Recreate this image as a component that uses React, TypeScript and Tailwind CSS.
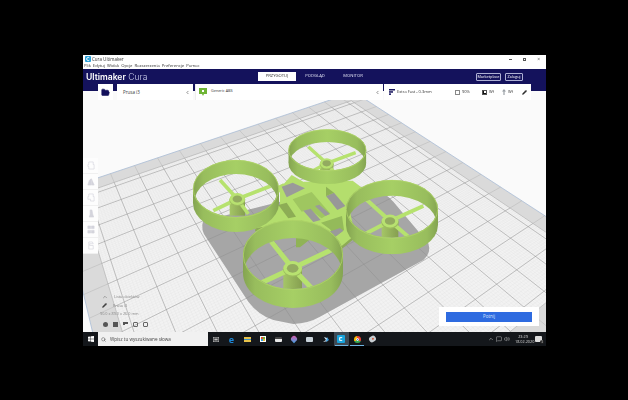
import { ChevronLeft, ChevronUp, FolderOpen, Pencil, Search, Volume2, MessageSquare } from "lucide-react";

type P = [number, number];

const P1: P = [58.9, 190.9];
const P0: P = [354, 92];
const P2: P = [627, 269];
const P3: P = [172, 665];
const N = 15;

function makeH(a: P, b: P, c: P, d: P) {
  const dx1 = b[0] - c[0], dx2 = d[0] - c[0], sx = a[0] - b[0] + c[0] - d[0];
  const dy1 = b[1] - c[1], dy2 = d[1] - c[1], sy = a[1] - b[1] + c[1] - d[1];
  const det = dx1 * dy2 - dx2 * dy1;
  const g = (sx * dy2 - dx2 * sy) / det;
  const h = (dx1 * sy - sx * dy1) / det;
  const A = b[0] - a[0] + g * b[0], B = d[0] - a[0] + h * d[0], C = a[0];
  const D = b[1] - a[1] + g * b[1], E = d[1] - a[1] + h * d[1], F = a[1];
  return (u: number, v: number): P => {
    const w = g * u + h * v + 1;
    return [(A * u + B * v + C) / w, (D * u + E * v + F) / w];
  };
}
const H = makeH(P1, P0, P2, P3);
const M = 0.048;

function gridPath(n: number) {
  let s = "";
  for (let i = 1; i < n; i++) {
    const t = i / n;
    const a = H(t, M), b = H(t, 1 - M), c = H(M, t), d = H(1 - M, t);
    if (t > M && t < 1 - M) {
      s += `M${a[0].toFixed(1)} ${a[1].toFixed(1)}L${b[0].toFixed(1)} ${b[1].toFixed(1)}`;
      s += `M${c[0].toFixed(1)} ${c[1].toFixed(1)}L${d[0].toFixed(1)} ${d[1].toFixed(1)}`;
    }
  }
  return s;
}
function bandPath(n: number) {
  let s = "";
  for (let i = 1; i < n; i++) {
    const t = i / n;
    const pairs: [P, P][] = [
      [H(t, 0), H(t, M)],
      [H(t, 1 - M), H(t, 1)],
      [H(0, t), H(M, t)],
      [H(1 - M, t), H(1, t)],
    ];
    for (const [a, b] of pairs) s += `M${a[0].toFixed(1)} ${a[1].toFixed(1)}L${b[0].toFixed(1)} ${b[1].toFixed(1)}`;
  }
  return s;
}
const poly = (pts: P[]) => pts.map((p) => p.map((v) => v.toFixed(1)).join(",")).join(" ");

type RingP = {
  id: string;
  cx: number;
  top: number;
  bot: number;
  rx: number;
  ry: number;
  hub: P;
  spokes: P[];
  w: number;
  hubR: number;
  col: number;
};

const rings: RingP[] = [
  { id: "b", cx: 442, top: 91, bot: 129, rx: 117, ry: 63, hub: [440, 130], spokes: [[385, 80], [527, 98], [385, 160], [470, 165]], w: 10, hubR: 20, col: 36 },
  { id: "a", cx: 168, top: 207, bot: 249, rx: 129, ry: 87, hub: [172, 237], spokes: [[120, 180], [280, 195], [100, 272], [205, 282]], w: 11, hubR: 23, col: 50 },
  { id: "c", cx: 636, top: 268, bot: 315, rx: 138, ry: 88, hub: [630, 303], spokes: [[555, 235], [730, 258], [555, 342], [692, 356]], w: 12, hubR: 25, col: 52 },
  { id: "d", cx: 339, top: 405, bot: 459, rx: 150, ry: 105, hub: [338, 445], spokes: [[270, 360], [458, 388], [230, 495], [400, 510]], w: 15, hubR: 28, col: 75 },
];

function Ring({ r }: { r: RingP }) {
  return (
    <g>
      <defs>
        <clipPath id={`top-${r.id}`}>
          <ellipse cx={r.cx} cy={r.top} rx={r.rx - 3} ry={r.ry - 3} />
        </clipPath>
        <clipPath id={`bot-${r.id}`}>
          <ellipse cx={r.cx} cy={r.bot} rx={r.rx - 3} ry={r.ry} />
        </clipPath>
        <mask id={`m-${r.id}`} maskUnits="userSpaceOnUse" x="-100" y="-100" width="1200" height="1000">
          <ellipse cx={r.cx} cy={r.top} rx={r.rx} ry={r.ry} fill="white" />
          <ellipse cx={r.cx} cy={r.bot} rx={r.rx} ry={r.ry} fill="white" />
          <rect x={r.cx - r.rx} y={r.top} width={r.rx * 2} height={r.bot - r.top} fill="white" />
          <g clipPath={`url(#top-${r.id})`}>
            <ellipse cx={r.cx} cy={r.bot} rx={r.rx - 3} ry={r.ry} fill="black" />
          </g>
        </mask>
      </defs>
      <g clipPath={`url(#bot-${r.id})`}>
        <g clipPath={`url(#top-${r.id})`}>
          <rect x={r.hub[0] - r.hubR} y={r.hub[1]} width={r.hubR * 2} height={r.col} fill="url(#col)" />
          {r.spokes.map((s, i) => (
            <line key={i} x1={r.hub[0]} y1={r.hub[1]} x2={s[0]} y2={s[1]} stroke="#b6e26e" strokeWidth={r.w} />
          ))}
        </g>
      </g>
      <ellipse cx={r.hub[0]} cy={r.hub[1] + 3} rx={r.hubR + 1} ry={r.hubR * 0.8} fill="#9dbd5f" />
      <ellipse cx={r.hub[0]} cy={r.hub[1]} rx={r.hubR} ry={r.hubR * 0.78} fill="#b8e270" />
      <ellipse cx={r.hub[0]} cy={r.hub[1]} rx={r.hubR * 0.62} ry={r.hubR * 0.46} fill="#93ab60" />
      <g mask={`url(#m-${r.id})`}>
        <rect x={r.cx - r.rx} y={r.top - r.ry} width={r.rx * 2} height={r.bot - r.top + r.ry * 2} fill="url(#wall)" />
      </g>
      <ellipse cx={r.cx} cy={r.top} rx={r.rx - 1} ry={r.ry - 1} fill="none" stroke="#aed468" strokeWidth="2.5" />
    </g>
  );
}

function Viewport() {
  const c = {
    outer: [H(0, 0), H(1, 0), H(1, 1), H(0, 1)],
    inner: [H(M, M), H(1 - M, M), H(1 - M, 1 - M), H(M, 1 - M)],
  };
  return (
    <svg viewBox="83 91 463 241" className="w-full h-full block">
      <defs>
        <linearGradient id="wall" x1="0" x2="1" y1="0" y2="0">
          <stop offset="0" stopColor="#84a451" />
          <stop offset="0.12" stopColor="#98bd5d" />
          <stop offset="0.5" stopColor="#a6cf65" />
          <stop offset="0.88" stopColor="#98bd5d" />
          <stop offset="1" stopColor="#84a451" />
        </linearGradient>
        <linearGradient id="col" x1="0" x2="1" y1="0" y2="0">
          <stop offset="0" stopColor="#a5c666" />
          <stop offset="0.5" stopColor="#95b25b" />
          <stop offset="1" stopColor="#869f50" />
        </linearGradient>
      </defs>
      <rect x="83" y="91" width="463" height="241" fill="#fafafa" />
      <polygon points={poly(c.outer)} fill="#dadada" stroke="#a9bdd6" strokeWidth="0.8" />
      <polygon points={poly(c.inner)} fill="#f2f2f2" />
      <path d={gridPath(150)} stroke="#dedede" strokeWidth="0.25" fill="none" />
      <g transform="translate(180 120) scale(0.33333)">
        <path
          d="M70 300 Q60 330 80 355 L205 545 Q235 585 280 600 L340 612 Q385 610 420 590 L730 420 Q755 400 745 370 L640 245 Q600 200 540 200 L420 215 L120 290 Q85 290 70 300Z"
          fill="#a6a6a6"
        />
      </g>
      <path d={gridPath(N)} stroke="#8f8f8f" strokeWidth="0.5" fill="none" />
      <path d={bandPath(N)} stroke="#b5b5b5" strokeWidth="0.5" fill="none" />
      <polygon points={poly(c.inner)} fill="none" stroke="#a0a0a0" strokeWidth="0.5" />

      <g transform="translate(180 120) scale(0.33333)">
        <path d="M518 182 L548 205 L505 250 L525 345 L485 378 L365 302 L225 325 L228 305 L300 255 L300 205 L335 165 L370 185Z" fill="#8dab56" transform="translate(0 9)" />
        <path d="M280 205 L310 190 L320 205 L290 222Z" fill="#b4dd6d" />
        <path d="M518 182 L548 205 L505 250 L525 345 L485 378 L365 302 L225 325 L228 305 L300 255 L300 205 L335 165 L370 185Z" fill="#b4de6d" />
        <g transform="translate(240 150)">
          <polygon points="65,50 98,38 135,55 80,82" fill="#9a9a9a" />
          <polygon points="98,88 155,66 210,130 185,145 178,140 150,118 125,125" fill="#9fc660" />
          <polygon points="130,122 152,116 182,150 160,156" fill="#9a9a9a" />
          <polygon points="165,108 178,104 210,132 196,138" fill="#9a9a9a" />
          <polygon points="198,78 222,68 256,108 232,120" fill="#989898" />
          <polygon points="198,50 222,68 198,78" fill="#8fb356" />
          <polygon points="55,105 80,98 108,140 85,145" fill="#8dad55" />
          <polygon points="183,158 246,138 252,180 226,200 210,178" fill="#94ba5a" />
          <polygon points="208,185 240,174 250,182 226,200" fill="#9a9a9a" />
        </g>
        <polygon points="348,350 400,350 360,382 348,382" fill="#90b356" />
        {rings.map((r) => (
          <Ring key={r.id} r={r} />
        ))}
      </g>
    </svg>
  );
}

function MiniTool({ i }: { i: number }) {
  return (
    <div className="h-[16px] flex items-center justify-center border-b border-[#f0f0f0] bg-[#fdfdfd]">
      <svg width="8" height="9" viewBox="0 0 9 10" fill="none" stroke="#d4d4dc" strokeWidth="0.7">
        {i === 0 && <path d="M2 1h5v3h1v5H2V6H1V4h1z" />}
        {i === 1 && <path d="M1 9l1.5-5 2-2v7zM5 9V2l3 7z" fill="#d4d4dc" />}
        {i === 2 && <path d="M2 1h5v3h1v5H4V7H1V4h1z" />}
        {i === 3 && <path d="M3.5 1h2l1 5 1 3h-5l1-3z" fill="#d4d4dc" />}
        {i === 4 && <path d="M1 1h3v3H1zM5 1h3v3H5zM1 6h3v3H1zM5 6h3v3H5z" fill="#d4d4dc" />}
        {i === 5 && <path d="M2 1h4l1 2H3v2h4v4H2z" />}
      </svg>
    </div>
  );
}

function TB({ children, active, under }: { children: React.ReactNode; active?: boolean; under?: boolean }) {
  return (
    <div className={`relative w-[15.7px] h-full flex items-center justify-center ${active ? "bg-[#3d4a55]" : ""}`}>
      {children}
      {under && <div className="absolute bottom-0 left-[1px] right-[1px] h-[1px] bg-[#6fb3e0]" />}
    </div>
  );
}

export default function App() {
  return (
    <div className="w-[628px] h-[400px] bg-black overflow-hidden pt-[55px] pl-[83px] font-['Open_Sans','Liberation_Sans',sans-serif]">
      <div className="relative w-[463px] h-[291px] flex flex-col blur-[0.4px]">
        <div className="h-[8px] bg-white flex items-center pl-[2px] text-[#333] text-[4.5px]">
          <svg width="6" height="6" viewBox="0 0 6 6"><rect width="6" height="6" rx="1" fill="#2a9fd6" /><path d="M4.3 1.8A1.6 1.6 0 1 0 4.3 4.2" stroke="#fff" strokeWidth="0.9" fill="none" /></svg>
          <span className="ml-[1px]">Cura Ultimaker</span>
          <div className="ml-auto flex items-center gap-[11px] pr-[6px] text-[#555]">
            <div className="w-[3px] h-[0.6px] bg-[#555]" />
            <div className="w-[3px] h-[3px] border-[0.6px] border-[#555]" />
            <span className="text-[5px] leading-none">×</span>
          </div>
        </div>
        <div className="h-[6px] bg-white flex items-center pl-[1px] gap-[2px] text-[#333] text-[4.2px] leading-none">
          {["Plik", "Edytuj", "Widok", "Opcje", "Rozszerzenia", "Preferencje", "Pomoc"].map((m) => (
            <span key={m}>{m}</span>
          ))}
        </div>
        <div className="h-[22px] bg-[#14125c] flex items-start pt-[3px] pl-[3px] text-white">
          <div className="text-[8.6px] leading-[10px] w-[172px] font-['Inter','Liberation_Sans',sans-serif]">
            <span className="font-semibold">Ultimaker</span> <span className="font-light text-[#cfd2ee]">Cura</span>
          </div>
          <div className="w-[38px] h-[9px] bg-white text-[#333] text-[4.2px] flex items-center justify-center">PRZYGOTUJ</div>
          <div className="w-[38px] h-[9px] text-[4.2px] flex items-center justify-center text-[#dfe0f2]">PODGLĄD</div>
          <div className="w-[38px] h-[9px] text-[4.2px] flex items-center justify-center text-[#dfe0f2]">MONITOR</div>
          <div className="ml-[104px] mt-[1px] w-[25px] h-[8px] border-[0.6px] border-[#aeb0d4] rounded-[1px] text-[3.8px] flex items-center justify-center">Marketplace</div>
          <div className="ml-[4px] mt-[1px] w-[18px] h-[8px] border-[0.6px] border-[#aeb0d4] rounded-[1px] text-[3.8px] flex items-center justify-center">Zaloguj</div>
        </div>
        <div className="relative h-[241px] overflow-hidden">
          <Viewport />
          <div className="absolute left-0 top-[67px] w-[15px] bg-white">
            {[0, 1, 2, 3, 4, 5].map((i) => (
              <MiniTool key={i} i={i} />
            ))}
          </div>
          <div className="absolute left-[19px] top-[202px] text-[#8a8a8a] text-[3.8px] leading-none">
            <div className="flex items-center gap-[6px] h-[8px]">
              <ChevronUp size={6} strokeWidth={2} color="#666" />
              <span>Lista obiektów</span>
            </div>
            <div className="flex items-center gap-[3px] h-[9px]">
              <Pencil size={5} strokeWidth={2} color="#444" fill="#444" />
              <span className="ml-[3px]">Prusa i3</span>
            </div>
            <div className="h-[8px] flex items-center -ml-[2px]">90.0 x 89.0 x 26.0 mm</div>
            <div className="flex items-center gap-[5px] h-[10px] ml-[1px] mt-[1px]">
              <div className="w-[5px] h-[5px] rounded-full bg-[#555]" />
              <div className="w-[5px] h-[5px] bg-[#555]" />
              <div className="w-[5px] h-[5px] bg-[linear-gradient(160deg,#555_50%,transparent_50%)]" />
              <div className="w-[5px] h-[5px] border-[0.6px] border-[#666] rounded-[1px]" />
              <div className="w-[5px] h-[5px] border-[0.6px] border-[#666] rounded-[1px]" />
            </div>
          </div>
          <div className="absolute left-[356px] top-[216px] w-[100px] h-[19px] bg-white flex items-center justify-center">
            <div className="w-[86px] h-[10px] bg-[#2e6be0] text-[#d9e6ff] text-[4.5px] flex items-center justify-center">Potnij</div>
          </div>
        </div>
        <div className="h-[14px] bg-[#14171b] flex items-center text-white">
          <div className="w-[15px] h-full flex items-center justify-center">
            <svg width="6" height="6" viewBox="0 0 6 6" fill="#fff"><path d="M0 .8L2.6.4V2.8H0zM3 .3L6 0v2.8H3zM0 3.2H2.6V5.6L0 5.2zM3 3.2H6V6L3 5.7z" /></svg>
          </div>
          <div className="w-[110px] h-full bg-[#f1f1f1] flex items-center pl-[3px] text-[#444] text-[4.6px]">
            <Search size={5} strokeWidth={2} color="#333" />
            <span className="ml-[4px]">Wpisz tu wyszukiwane słowa</span>
          </div>
          <div className="flex items-center h-full">
            <TB><svg width="6" height="5" viewBox="0 0 6 5"><rect x="0.3" y="0.3" width="5.4" height="4.4" fill="none" stroke="#bbb" strokeWidth="0.6" /><rect x="1.3" y="1.5" width="3.4" height="2" fill="#bbb" /></svg></TB>
            <TB><span className="text-[#1e88d8] font-bold text-[9px] leading-none">e</span></TB>
            <TB><div className="w-[7px] h-[5px] bg-[linear-gradient(180deg,#e8c24a_0_40%,#3a8fc4_40%_70%,#e8c24a_70%)]" /></TB>
            <TB><div className="w-[6px] h-[6px] bg-white grid grid-cols-2 gap-[0.5px] p-[1px]"><i className="bg-[#e0532d]" /><i className="bg-[#6fb23c]" /><i className="bg-[#2d9be0]" /><i className="bg-[#e8b52d]" /></div></TB>
            <TB><div className="w-[7px] h-[5px] rounded-[1px] bg-[#e8e8e8] border-t-[2px] border-[#444]" /></TB>
            <TB><div className="w-[6px] h-[6px] rounded-full rounded-br-none rotate-45 bg-[linear-gradient(135deg,#ea4fa0,#3fa7e8)]" /></TB>
            <TB><div className="w-[7px] h-[5px] bg-[#c9d3da] rounded-[1px]" /></TB>
            <TB><svg width="8" height="7" viewBox="0 0 8 7"><path d="M2 1l3 1 1 3-5 1 3-2z" fill="#d8e8f4" /><path d="M5 1l2 3-3 2z" fill="#3b9ad9" /></svg></TB>
            <TB active under><div className="w-[8px] h-[8px] rounded-[1px] bg-[#18a3dc] flex items-center justify-center"><div className="w-[4px] h-[4px] rounded-full border-[1.2px] border-white border-r-transparent" /></div></TB>
            <TB under><div className="w-[7px] h-[7px] rounded-full bg-[conic-gradient(#ea4335_0_33%,#34a853_33%_66%,#fbbc05_66%)] flex items-center justify-center"><div className="w-[3px] h-[3px] rounded-full bg-[#4285f4] border-[0.5px] border-white" /></div></TB>
            <TB><div className="w-[7px] h-[6px] rounded-full bg-[#c8ced2] rotate-[-30deg] flex items-center justify-center"><div className="w-[2px] h-[2px] rounded-full bg-[#d0593c]" /></div></TB>
          </div>
          <div className="ml-auto flex items-center h-full text-[#ddd]">
            <ChevronUp size={6} strokeWidth={2} />
            <MessageSquare size={6} strokeWidth={1.6} className="ml-[2px]" />
            <Volume2 size={6} strokeWidth={1.6} className="ml-[2px]" />
            <div className="ml-[5px] w-[16px] text-center text-[3.8px] leading-[5px]">
              <div>23:29</div>
              <div>18.02.2020</div>
            </div>
            <div className="mx-[4px] relative w-[7px] h-[6px] bg-[#ddd] rounded-[1px]">
              <div className="absolute -right-[2px] -bottom-[2px] w-[4px] h-[4px] rounded-full bg-[#222] text-[3px] leading-[4px] text-center">3</div>
            </div>
          </div>
        </div>

        <div className="absolute left-[15px] top-[29px] w-[433px] h-[16px] flex text-[#333] text-[4.5px]">
          <div className="w-[15px] bg-white flex items-center justify-center">
            <FolderOpen size={9} color="#14125c" fill="#14125c" strokeWidth={1.5} />
          </div>
          <div className="ml-[4px] w-[76px] bg-white flex items-center pl-[6px] pr-[3px]">
            <span>Prusa i3</span>
            <ChevronLeft size={5} strokeWidth={2.5} className="ml-auto" />
          </div>
          <div className="ml-[2px] w-[188px] bg-white flex items-center pl-[3px] pr-[3px] border-l border-[#eee]">
            <svg width="8" height="8" viewBox="0 0 8 8"><path d="M0 0h8v6H5L4 8 3 6H0z" fill="#6fb536" /><rect x="3" y="2" width="2" height="2" fill="#fff" /></svg>
            <span className="ml-[4px] -mt-[3px] text-[3.8px]">Generic ABS</span>
            <ChevronLeft size={5} strokeWidth={2.5} className="ml-auto" />
          </div>
          <div className="ml-[1px] flex-1 bg-white flex items-center pl-[5px] text-[4px]">
            <svg width="6" height="6" viewBox="0 0 6 6" fill="#14125c"><rect width="6" height="1.5" /><rect y="2.2" width="4" height="1.5" /><rect y="4.4" width="2" height="1.5" /></svg>
            <span className="ml-[2px] w-[58px]">Extra Fast - 0.3mm</span>
            <div className="w-[5px] h-[5px] border-[0.7px] border-[#888]" />
            <span className="ml-[2px] w-[20px]">90%</span>
            <div className="w-[5px] h-[5px] border-[0.7px] border-[#555] bg-[linear-gradient(45deg,#111_50%,transparent_50%)]" />
            <span className="ml-[2px] w-[13px]">Wł</span>
            <div className="w-[4px] h-[6px] bg-[#9aa0a6] [clip-path:polygon(50%_0,100%_40%,65%_40%,65%_100%,35%_100%,35%_40%,0_40%)]" />
            <span className="ml-[2px] w-[14px]">Wł</span>
            <Pencil size={5} strokeWidth={2} color="#333" fill="#333" />
          </div>
        </div>
      </div>
    </div>
  );
}
